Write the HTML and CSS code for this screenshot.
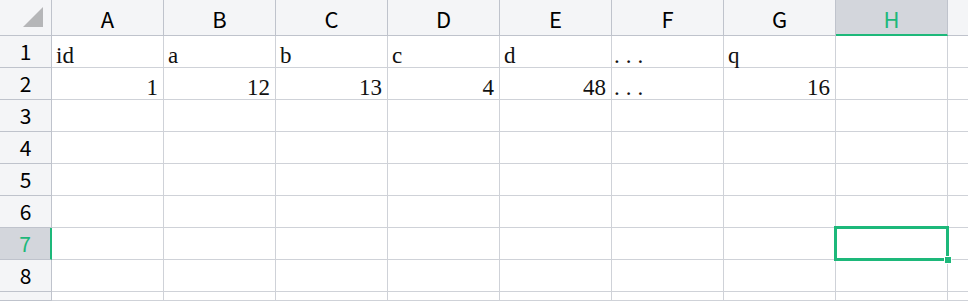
FILE: index.html
```html
<!DOCTYPE html>
<html>
<head>
<meta charset="utf-8">
<link rel="stylesheet" href="styles.css">
</head>
<body>
<div class="sheet">
  <div class="corner"><span class="tri"></span></div>
  <div class="ch">A</div><div class="ch">B</div><div class="ch">C</div><div class="ch">D</div>
  <div class="ch">E</div><div class="ch">F</div><div class="ch">G</div><div class="ch sel">H</div><div class="ch"></div>

  <div class="rh">1</div>
  <div class="c">id</div><div class="c">a</div><div class="c">b</div><div class="c">c</div><div class="c">d</div>
  <div class="c"><span class="dots">...</span></div><div class="c">q</div><div class="c"></div><div class="c"></div>

  <div class="rh">2</div>
  <div class="c n">1</div><div class="c n">12</div><div class="c n">13</div><div class="c n">4</div><div class="c n">48</div>
  <div class="c"><span class="dots">...</span></div><div class="c n">16</div><div class="c"></div><div class="c"></div>

  <div class="rh">3</div>
  <div class="c"></div><div class="c"></div><div class="c"></div><div class="c"></div><div class="c"></div><div class="c"></div><div class="c"></div><div class="c"></div><div class="c"></div>
  <div class="rh">4</div>
  <div class="c"></div><div class="c"></div><div class="c"></div><div class="c"></div><div class="c"></div><div class="c"></div><div class="c"></div><div class="c"></div><div class="c"></div>
  <div class="rh">5</div>
  <div class="c"></div><div class="c"></div><div class="c"></div><div class="c"></div><div class="c"></div><div class="c"></div><div class="c"></div><div class="c"></div><div class="c"></div>
  <div class="rh">6</div>
  <div class="c"></div><div class="c"></div><div class="c"></div><div class="c"></div><div class="c"></div><div class="c"></div><div class="c"></div><div class="c"></div><div class="c"></div>
  <div class="rh sel">7</div>
  <div class="c"></div><div class="c"></div><div class="c"></div><div class="c"></div><div class="c"></div><div class="c"></div><div class="c"></div><div class="c active"><span class="selbox"></span><span class="handle"></span></div><div class="c"></div>
  <div class="rh">8</div>
  <div class="c"></div><div class="c"></div><div class="c"></div><div class="c"></div><div class="c"></div><div class="c"></div><div class="c"></div><div class="c"></div><div class="c"></div>
  <div class="rh">9</div>
  <div class="c"></div><div class="c"></div><div class="c"></div><div class="c"></div><div class="c"></div><div class="c"></div><div class="c"></div><div class="c"></div><div class="c"></div>
</div>
</body>
</html>
```
FILE: styles.css
```css
html, body {
  margin: 0;
  padding: 0;
  background: #ffffff;
  overflow: hidden;
  height: 301px;
}
.sheet {
  display: grid;
  grid-template-columns: 52px repeat(8, 112px) 40px;
  grid-template-rows: 36px repeat(8, 32px) 9px;
  width: 968px;
  height: 301px;
  overflow: hidden;
}
.sheet > div {
  box-sizing: border-box;
  border-right: 1px solid #cfd2d8;
  border-bottom: 1px solid #cfd2d8;
}
.corner {
  background: #f4f5f7;
  border-color: #bfc3cc !important;
  display: flex;
  justify-content: flex-end;
  align-items: flex-end;
  padding: 0 8px 8px 0;
}
.tri {
  width: 20px;
  height: 20px;
  background: #b5b6b8;
  clip-path: polygon(100% 0, 100% 100%, 0 100%);
}
.ch, .rh {
  background: #f4f5f7;
  border-color: #bfc3cc !important;
  font-family: "Noto Sans CJK SC", "Noto Sans", sans-serif;
  font-size: 21px;
  color: #000;
  display: flex;
  align-items: center;
  justify-content: center;
}
.rh {
  overflow: visible;
  align-items: flex-start;
  padding-top: 1px;
  line-height: 29px;
}
.ch {
  font-size: 22px;
  padding-top: 1px;
}
.ch.sel {
  background: #d3d6dc;
  color: #1db87a;
  border-bottom: 2px solid #1db87a !important;
  padding-top: 2px;
}
.rh.sel {
  background: #d3d6dc;
  color: #1db87a;
  border-right: 2px solid #1db87a !important;
}
.c {
  font-family: "Liberation Serif", "Times New Roman", serif;
  font-size: 23px;
  line-height: 23px;
  color: #111;
  display: flex;
  align-items: flex-end;
  padding: 0 4px 0 4px;
  white-space: nowrap;
}
.c.n {
  justify-content: flex-end;
  padding-right: 5px;
}
.dots {
  letter-spacing: 6px;
  margin-left: -2px;
}
.c.active {
  position: relative;
}
.selbox {
  position: absolute;
  left: -2px;
  top: -2px;
  right: -2px;
  bottom: -2px;
  border: 3px solid #1db87a;
}
.handle {
  position: absolute;
  right: -5px;
  bottom: -5px;
  width: 6px;
  height: 6px;
  background: #1db87a;
  border: 1px solid #ffffff;
}
```
